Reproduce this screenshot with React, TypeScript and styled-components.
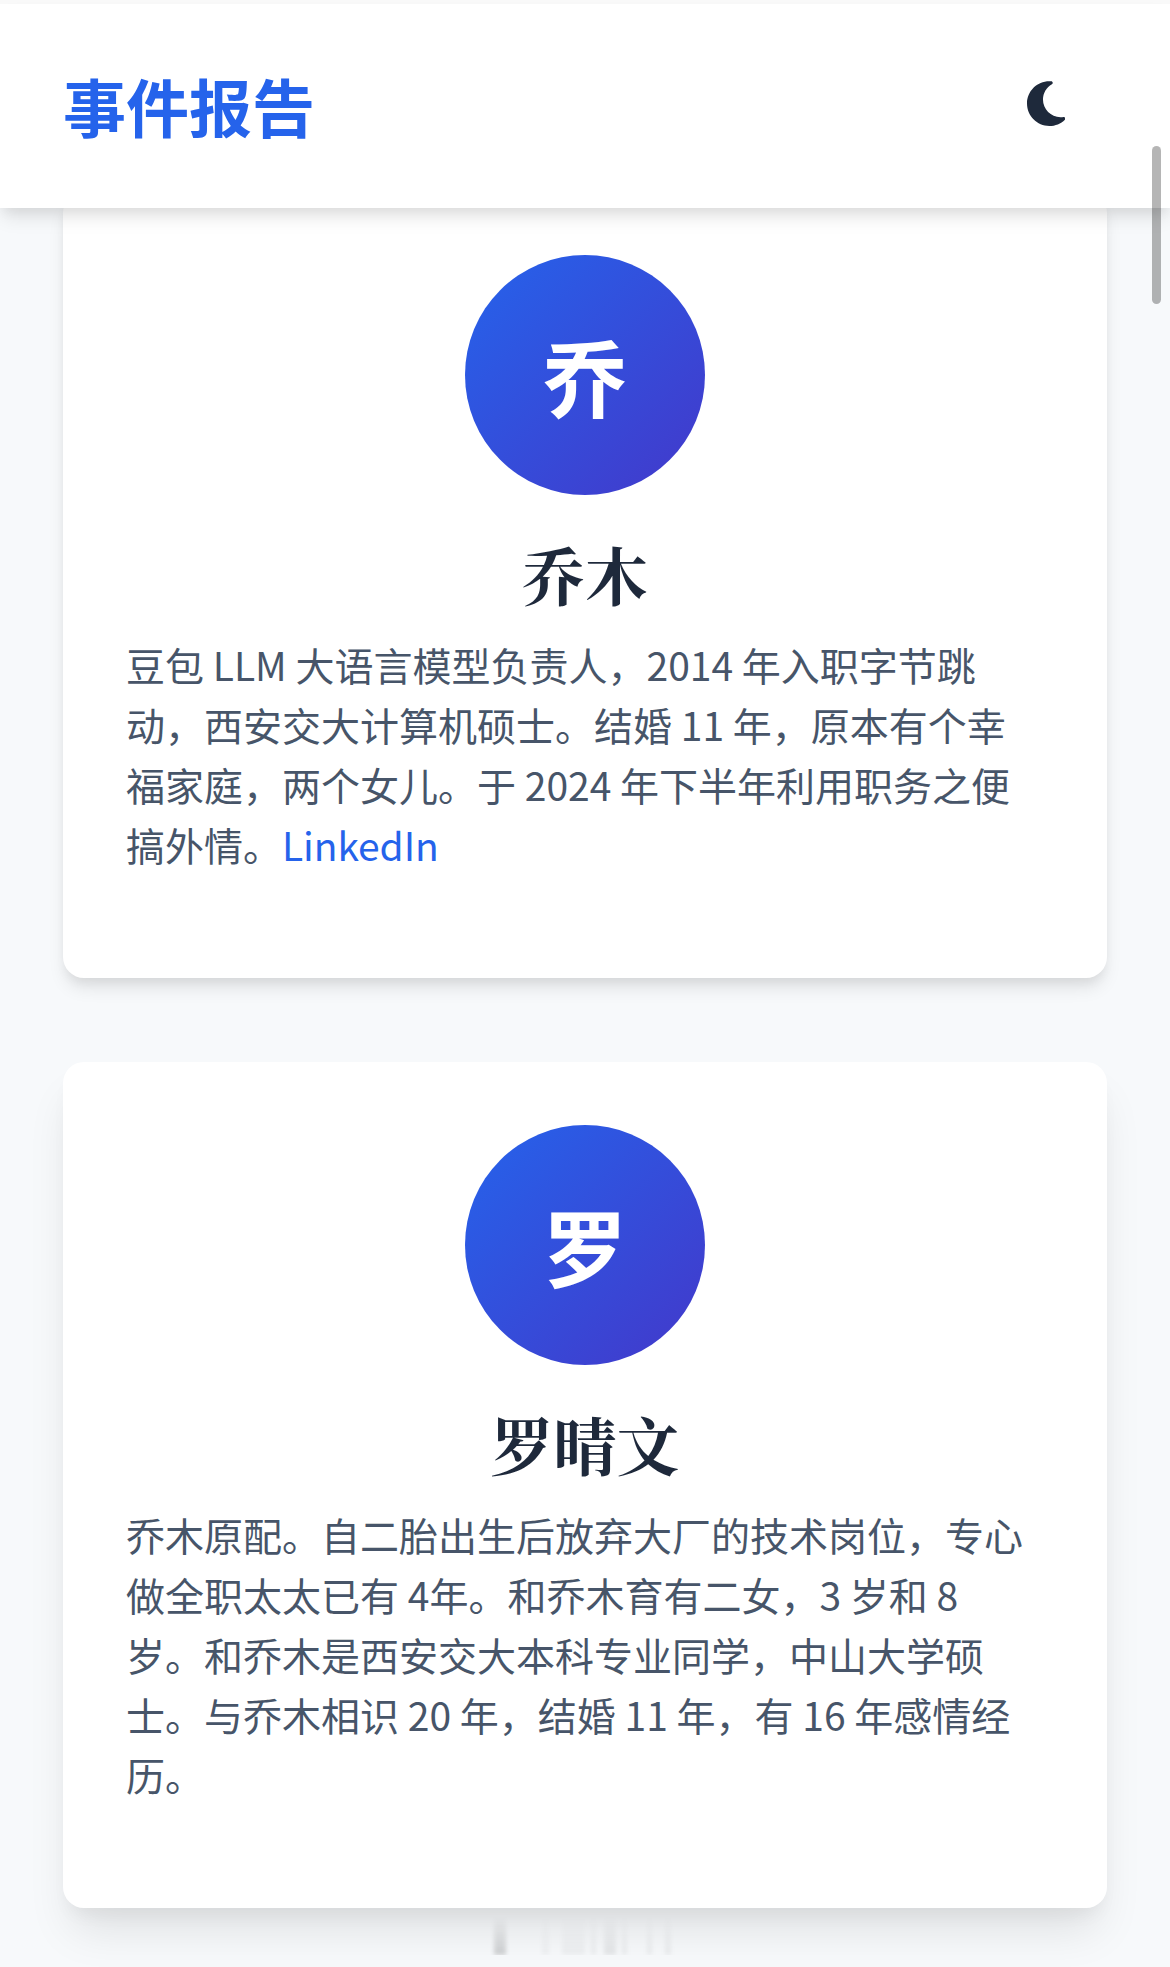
import React from "react";
import styled, { createGlobalStyle } from "styled-components";
import { FaMoon } from "react-icons/fa6";

const GlobalStyle = createGlobalStyle`
  *, *::before, *::after { box-sizing: border-box; }
  html, body { margin: 0; padding: 0; }
  body {
    height: 1967px;
    overflow: hidden;
    background: #f7f9fb;
    color: #1e293b;
    font-family: "Noto Sans CJK SC", sans-serif;
  }
`;

const Page = styled.div`
  display: flex;
  flex-direction: column;
  height: 1967px;
  overflow: hidden;
  background: #f7f9fb;
`;

const StatusStrip = styled.div`
  flex: none;
  height: 4px;
  background: #f9f9f9;
`;

const Header = styled.header`
  position: relative;
  z-index: 2;
  flex: none;
  display: flex;
  align-items: center;
  justify-content: space-between;
  height: 204px;
  padding: 0 105px 0 63px;
  background: #fff;
  box-shadow: 0 12px 18px -3px rgba(0, 0, 0, 0.1), 0 6px 12px -3px rgba(0, 0, 0, 0.06);
`;

const Brand = styled.h1`
  margin: 0;
  padding-bottom: 3px;
  font-size: 63px;
  line-height: 96px;
  font-weight: 700;
  color: #2563eb;
`;

const ThemeButton = styled.button`
  display: flex;
  padding: 0 0 4px;
  border: 0;
  background: none;
  color: #1e293b;
  svg { width: 38.4px; height: 51.2px; }
`;

const People = styled.main`
  flex: none;
  display: flex;
  flex-direction: column;
  gap: 84px;
  margin-top: -16px;
  padding: 0 63px;
`;

const Card = styled.article<{ $raised?: boolean }>`
  display: flex;
  flex-direction: column;
  align-items: center;
  padding: 63px 63px 104px;
  border-radius: 21px;
  background: #fff;
  box-shadow: ${(p) =>
    p.$raised
      ? "0 30px 45px -9px rgba(0, 0, 0, 0.1), 0 12px 18px -6px rgba(0, 0, 0, 0.05)"
      : "0 12px 18px -3px rgba(0, 0, 0, 0.1), 0 6px 12px -3px rgba(0, 0, 0, 0.06)"};
`;

const Avatar = styled.div`
  display: flex;
  align-items: center;
  justify-content: center;
  width: 240px;
  height: 240px;
  border-radius: 50%;
  background: linear-gradient(135deg, #2563eb, #4338ca);
  color: #fff;
  font-size: 84px;
  line-height: 126px;
  font-weight: 700;
`;

const Name = styled.h2`
  margin: 30px 0 13px;
  font-family: "Noto Serif CJK SC", "Source Han Serif SC", "Noto Serif SC", "Noto Sans CJK SC", serif;
  font-size: 63px;
  line-height: 96px;
  font-weight: 700;
  color: #1e293b;
`;

const Bio = styled.p`
  align-self: stretch;
  margin: 0;
  font-size: 39px;
  line-height: 60px;
  color: #475569;
`;

const BioLink = styled.a`
  color: #2563eb;
  letter-spacing: -0.1px;
  text-decoration: none;
`;

const ScrollThumb = styled.div`
  position: fixed;
  z-index: 3;
  top: 146px;
  right: 9px;
  width: 9px;
  height: 158px;
  border-radius: 5px;
  background: rgba(0, 0, 0, 0.29);
`;

const BottomHaze = styled.div`
  flex: none;
  display: flex;
  align-self: flex-start;
  height: 38px;
  margin: 9px 0 0 482px;
  filter: blur(2px);
  clip-path: inset(0 -10px 0 -10px);
`;

const Smudge = styled.span<{ $gap: number; $w: number; $a: number }>`
  width: ${(p) => p.$w}px;
  margin-left: ${(p) => p.$gap}px;
  background: linear-gradient(rgba(0, 0, 0, 0), rgba(0, 0, 0, ${(p) => p.$a}));
`;

const smudges = [
  [12, 12, 0.17],
  [36, 7, 0.035],
  [13, 23, 0.04],
  [6, 5, 0.05],
  [8, 12, 0.08],
  [6, 5, 0.055],
  [20, 5, 0.055],
  [13, 6, 0.055],
];

export default function App() {
  return (
    <>
      <GlobalStyle />
      <Page>
        <StatusStrip />
        <Header>
          <Brand>事件报告</Brand>
          <ThemeButton aria-label="theme">
            <FaMoon />
          </ThemeButton>
        </Header>
        <People>
          <Card>
            <Avatar>乔</Avatar>
            <Name>乔木</Name>
            <Bio>
              豆包 LLM 大语言模型负责人，2014 年入职字节跳动，西安交大计算机硕士。结婚 11 年，原本有个幸福家庭，两个女儿。于 2024 年下半年利用职务之便搞外情。<BioLink>LinkedIn</BioLink>
            </Bio>
          </Card>
          <Card $raised>
            <Avatar>罗</Avatar>
            <Name>罗晴文</Name>
            <Bio>
              乔木原配。自二胎出生后放弃大厂的技术岗位，专心做全职太太已有 4年。和乔木育有二女，3 岁和 8 岁。和乔木是西安交大本科专业同学，中山大学硕士。与乔木相识 20 年，结婚 11 年，有 16 年感情经历。
            </Bio>
          </Card>
        </People>
        <BottomHaze>
          {smudges.map(([gap, w, a], i) => (
            <Smudge key={i} $gap={gap} $w={w} $a={a} />
          ))}
        </BottomHaze>
      </Page>
      <ScrollThumb />
    </>
  );
}
